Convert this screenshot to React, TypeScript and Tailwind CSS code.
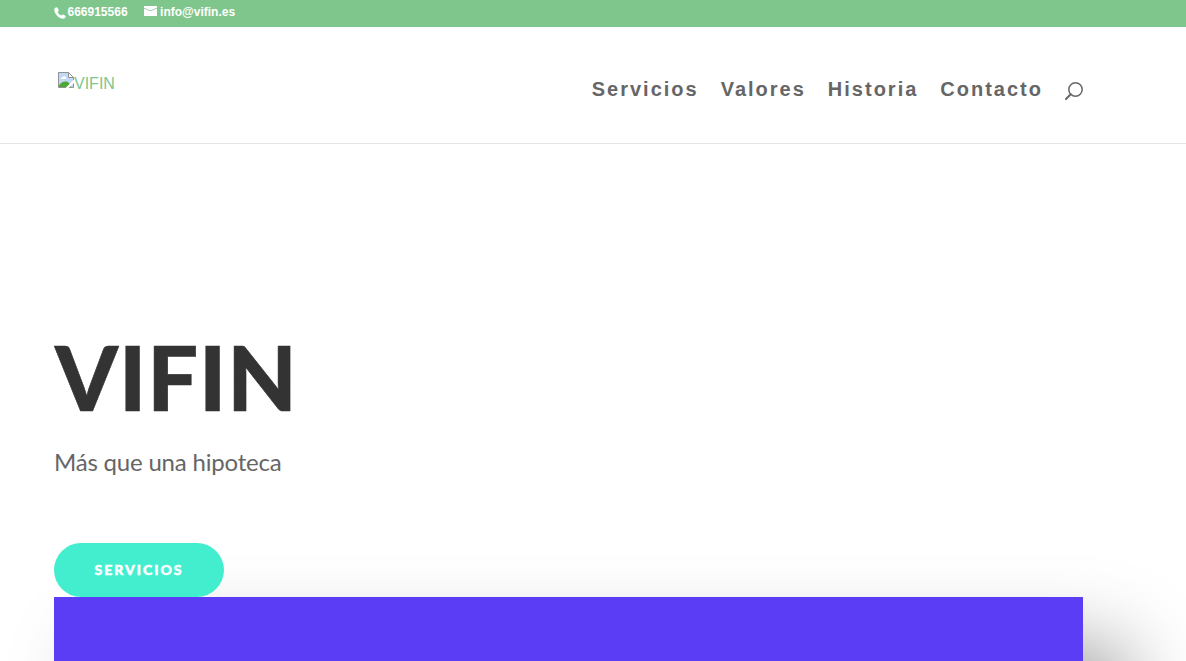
const links = ['Servicios', 'Valores', 'Historia', 'Contacto'];

const PhoneIcon = () => (
  <svg width="12" height="12" viewBox="0 0 12 12" fill="#fff">
    <path d="M2.600.2C1.500.3.200 1.400.200 2.500c0 4.200 4.900 9.300 8.900 9.300 1.200 0 2.600-1.200 2.700-2.300 0-.8-2.200-2.100-2.900-2.100-.8 0-1.100.9-1.700.9C6.200 8.300 3.800 5.900 3.800 5c0-.6.9-1 .9-1.800C4.700 2.300 3.300.2 2.600.2Z" />
  </svg>
);

const MailIcon = () => (
  <svg width="13" height="10" viewBox="0 0 13 10" fill="#fff">
    <path d="M0 0h13v1.800L6.500 4.500 0 1.800Z" />
    <path d="M0 2.500 6.500 5.300 13 2.500V10H0Z" />
  </svg>
);

const SearchIcon = () => (
  <svg width="18" height="18" viewBox="0 0 18 18" fill="none" stroke="#666">
    <circle cx="10.500" cy="7.500" r="6.700" strokeWidth="1.500" />
    <path d="M5.700 12.300 1 17" strokeWidth="2" strokeLinecap="round" />
  </svg>
);

const BrokenImage = () => (
  <svg width="16" height="16" viewBox="0 0 16 16">
    <path d="M.5.5h10l5 5v10H.5Z" fill="#c3d7f7" stroke="#929292" />
    <path d="M10.500.5v5h5Z" fill="#fff" stroke="#929292" />
    <path d="M3 6.500c0-1 1-1.500 1.700-1.300C5.200 3.800 7.500 4 7.600 5.600c1 0 1.200 1.400.2 1.400H3.300Z" fill="#fff" />
    <path d="M1 13.500C2.500 11 5 9.500 7.500 9.500S12 11 13 15H1Z" fill="#4da735" />
    <path d="M16 7.500 8 15.500V16h2.500L16 11Z" fill="#fff" />
  </svg>
);

export default function App() {
  return (
    <div className="h-[661px] overflow-hidden bg-white font-['Liberation_Sans',Arial,sans-serif] text-[#666]">
      <div className="flex h-[27px] bg-[#7ec68c] pl-[54px] text-xs font-semibold text-white">
        <span className="flex h-6 items-center">
          <span className="mt-px mr-[1.500px]"><PhoneIcon /></span>
          666915566
        </span>
        <a className="ml-4 flex h-6 items-center">
          <span className="mr-[3.500px] mb-0.5"><MailIcon /></span>
          info@vifin.es
        </a>
      </div>

      <header className="flex h-[117px] justify-between border-b border-[#e5e5e5] pr-[103px] pl-[58px]">
        <div className="flex pt-[45px] text-base leading-6 text-[#7ec68c]">
          <BrokenImage />
          <span>VIFIN</span>
        </div>
        <nav className="flex h-[124px] items-center gap-[22px] text-xl leading-5 font-semibold tracking-[2px]">
          {links.map((link) => (
            <a key={link}>{link}</a>
          ))}
          <span className="pt-[3px]"><SearchIcon /></span>
        </nav>
      </header>

      <main className="px-[54px] pt-[182px] font-[Lato,sans-serif]">
        <h1 className="h-[100px] pl-px text-[90px] leading-[100px] font-black tracking-[0.9px] text-[#333] [-webkit-text-stroke:0.6px_#333]">
          VIFIN
        </h1>
        <p className="mt-[14px] text-2xl leading-[43px] tracking-[-0.2px]">Más que una hipoteca</p>
        <a className="relative z-10 mt-[60px] flex h-[54px] w-[170px] items-center justify-center rounded-full bg-[#43eecf] text-sm font-black tracking-[2px] text-white [-webkit-text-stroke:0.5px_#fff]">
          SERVICIOS
        </a>
        <section className="h-[500px] w-[1029px] bg-[#5b3df5] shadow-[42px_50px_76px_rgba(0,0,0,0.4)]" />
      </main>
    </div>
  );
}
